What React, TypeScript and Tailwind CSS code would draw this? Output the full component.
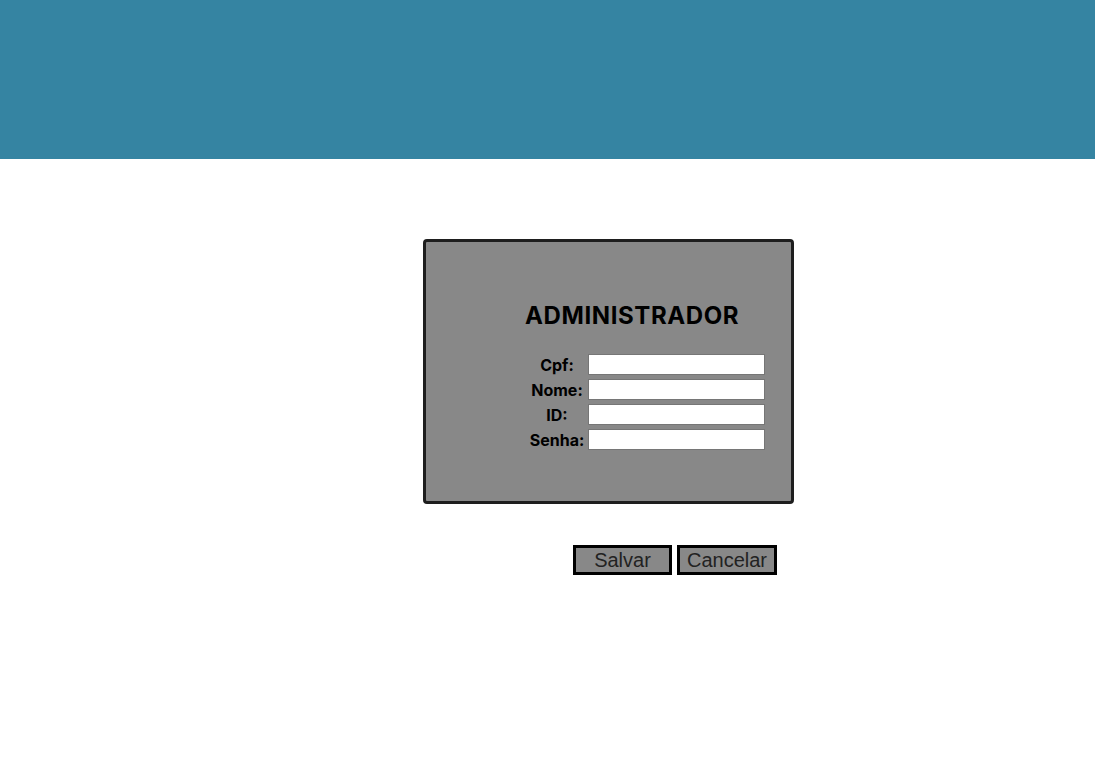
export default function App() {
    const fields = ["Cpf:", "Nome:", "ID:", "Senha:"];

    return (
        <div className="min-h-[760px] bg-white font-['Inter',sans-serif]">
            <header className="h-[159px] bg-[#3584a2]" />
            <div className="pl-[423px] pt-[80px]">
                <div className="w-[371px] h-[265px] bg-[#888888] border-[3px] border-[#1e1e1e] rounded-[4px] flex flex-col items-start pl-[99px] pt-[60px]">
                    <h1 className="text-[24px] leading-[28px] font-bold text-black tracking-[0.6px]">
                        ADMINISTRADOR
                    </h1>
                    <table className="mt-[22px] ml-[1px] border-separate border-spacing-[2px]">
                        <tbody>
                            {fields.map((label) => (
                                <tr key={label}>
                                    <td className="w-[58px] text-center text-[16px] font-bold text-black leading-[21px] p-0">
                                        {label}
                                    </td>
                                    <td className="p-0 pb-[2px]">
                                        <input className="block w-[177px] h-[21px] bg-white border border-[#767676]" />
                                    </td>
                                </tr>
                            ))}
                        </tbody>
                    </table>
                </div>
                <div className="flex gap-[5px] pl-[150px] pt-[41px] font-['Liberation_Sans',sans-serif]">
                    <button className="w-[99px] h-[30px] bg-[#888888] border-[3px] border-black text-[20px] leading-none text-[#222]">
                        Salvar
                    </button>
                    <button className="w-[100px] h-[30px] bg-[#888888] border-[3px] border-black text-[20px] leading-none text-[#222]">
                        Cancelar
                    </button>
                </div>
            </div>
        </div>
    );
}
